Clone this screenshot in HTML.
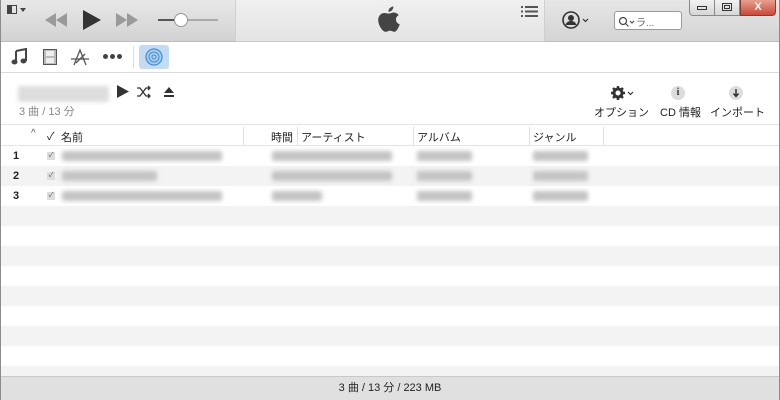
<!DOCTYPE html><html><head><meta charset="utf-8"><style>
*{margin:0;padding:0;box-sizing:border-box}
body{width:780px;height:400px;overflow:hidden;background:#fff;font-family:"Liberation Sans","Noto Sans CJK JP",sans-serif;font-size:11px;color:#222;position:relative}
.a{position:absolute}
.blur{position:absolute;background:#c4c4c4;filter:blur(2px);height:10px;border-radius:2px}
</style></head><body>
<div class="a" style="left:0;top:0;width:780px;height:400px;border:1px solid #8c8c8c;border-top:none"></div>
<div class="a" style="left:1px;top:0;width:234px;height:42px;background:linear-gradient(#e8e8e8,#d2d2d2);border-bottom:1px solid #bdbdbd"></div>
<div class="a" style="left:235px;top:0;width:310px;height:42px;background:linear-gradient(#f0f0f0,#e4e4e4);border-bottom:1px solid #c8c8c8;border-left:1px solid #cfcfcf;border-right:1px solid #cfcfcf"></div>
<div class="a" style="left:545px;top:0;width:234px;height:42px;background:linear-gradient(#e6e6e6,#d4d4d4);border-bottom:1px solid #bdbdbd"></div>
<div class="a" style="left:7px;top:5px;width:10px;height:9px;border:1px solid #444"><div style="width:4px;height:7px;background:#444"></div></div>
<div class="a" style="left:20px;top:8px;border-left:3px solid transparent;border-right:3px solid transparent;border-top:4px solid #444"></div>
<svg class="a" style="left:44px;top:12px" width="24" height="16"><path d="M12 1 L1 8 L12 15Z M23 1 L12 8 L23 15Z" fill="#9a9a9a"/></svg>
<svg class="a" style="left:81px;top:9px" width="22" height="22"><path d="M2 1 L20 11 L2 21Z" fill="#333"/></svg>
<svg class="a" style="left:115px;top:12px" width="24" height="16"><path d="M1 1 L12 8 L1 15Z M12 1 L23 8 L12 15Z" fill="#9a9a9a"/></svg>
<div class="a" style="left:158px;top:19px;width:60px;height:2px;background:#aaa"></div>
<div class="a" style="left:158px;top:19px;width:22px;height:2px;background:#555"></div>
<div class="a" style="left:174px;top:13px;width:14px;height:14px;border-radius:50%;background:#fff;border:1px solid #999"></div>
<svg class="a" style="left:377px;top:6px" width="24" height="28" viewBox="0 0 22 26"><path d="M15 0.5c0.3 2.3-2 5-4.5 4.8-0.3-2.3 2-4.6 4.5-4.8z M11 7c1.5 0 3-1 4.5-1 2 0 3.5 1 4.5 2.5-4 2-3 7.5 1 8.5-1 3-3 7-5 7-1.5 0-2-1-4-1s-2.5 1-4 1C5 24 1 18 1 13 1 9 4 6.5 6.5 6.5 8 6.5 9.5 7 11 7z" fill="#444"/></svg>
<svg class="a" style="left:521px;top:6px" width="18" height="12"><g fill="#555"><rect x="0" y="0" width="2" height="2"/><rect x="4" y="0" width="13" height="2"/><rect x="0" y="4.5" width="2" height="2"/><rect x="4" y="4.5" width="13" height="2"/><rect x="0" y="9" width="2" height="2"/><rect x="4" y="9" width="13" height="2"/></g></svg>
<svg class="a" style="left:562px;top:11px" width="30" height="18"><circle cx="9" cy="9" r="8" fill="none" stroke="#333" stroke-width="1.6"/><circle cx="9" cy="7" r="3" fill="#333"/><path d="M3.5 14c1-3 3-4 5.5-4s4.5 1 5.5 4z" fill="#333"/><path d="M21 8l2.5 2.5 2.5-2.5" fill="none" stroke="#333" stroke-width="1.2"/></svg>
<div class="a" style="left:614px;top:11px;width:68px;height:19px;background:#fff;border:1px solid #9a9a9a;border-radius:3px;font-size:10px;color:#666;padding:2px 0 0 3px"><svg width="18" height="12" style="vertical-align:-2px"><circle cx="5" cy="5" r="3.5" fill="none" stroke="#444" stroke-width="1.2"/><path d="M7.5 7.5l3 3M12 5l2 2 2-2" stroke="#444" fill="none" stroke-width="1.1"/></svg>ラ...</div>
<div class="a" style="left:689px;top:0;width:26px;height:16px;background:linear-gradient(#f2f2f2,#d6d6d6);border:1px solid #888;border-top:none;border-radius:0 0 0 4px"><div style="margin:6px auto 0;width:10px;height:4px;border:1px solid #333"></div></div>
<div class="a" style="left:715px;top:0;width:25px;height:16px;background:linear-gradient(#f2f2f2,#d6d6d6);border:1px solid #888;border-top:none;border-left:none"><div style="margin:3px auto 0;width:10px;height:8px;border:1px solid #333;padding:1px"><div style="width:6px;height:4px;border:1px solid #333"></div></div></div>
<div class="a" style="left:740px;top:0;width:36px;height:16px;background:linear-gradient(#e8a090,#c9483a);border:1px solid #8a3a30;border-top:none;border-radius:0 0 4px 0;color:#fff;text-align:center;font-weight:bold;font-size:11px;line-height:14px">X</div>
<div class="a" style="left:1px;top:72px;width:778px;height:1px;background:#dadada"></div>
<svg class="a" style="left:11px;top:48px" width="16" height="18"><path d="M5 3L15 1V13" fill="none" stroke="#444" stroke-width="2"/><ellipse cx="3.5" cy="14" rx="3" ry="2.5" fill="#444"/><ellipse cx="12.5" cy="13" rx="3" ry="2.5" fill="#444"/><path d="M5 3V14" stroke="#444" stroke-width="2"/></svg>
<svg class="a" style="left:43px;top:49px" width="14" height="16"><rect x="0.5" y="0.5" width="13" height="15" fill="#bbb" stroke="#555"/><rect x="3" y="2" width="8" height="5" fill="#eee"/><rect x="3" y="9" width="8" height="5" fill="#eee"/></svg>
<svg class="a" style="left:70px;top:47px" width="20" height="20"><path d="M4 18L10 3L16 18M1 12H19M6 16L15 7" fill="none" stroke="#555" stroke-width="1.3"/></svg>
<div class="a" style="left:103px;top:54px;width:20px;height:5px;line-height:0"><span style="display:inline-block;width:5px;height:5px;border-radius:50%;background:#444;margin-right:2px"></span><span style="display:inline-block;width:5px;height:5px;border-radius:50%;background:#444;margin-right:2px"></span><span style="display:inline-block;width:5px;height:5px;border-radius:50%;background:#444"></span></div>
<div class="a" style="left:133px;top:46px;width:1px;height:22px;background:#ddd"></div>
<div class="a" style="left:139px;top:45px;width:30px;height:24px;background:#c3dcf3;border-radius:3px"></div>
<svg class="a" style="left:145px;top:48px" width="18" height="18"><circle cx="9" cy="9" r="8" fill="#a9cdef" stroke="#4a8fd0" stroke-width="1.3"/><circle cx="9" cy="9" r="5" fill="none" stroke="#4a8fd0"/><circle cx="9" cy="9" r="2" fill="none" stroke="#4a8fd0"/></svg>
<div class="blur" style="left:18px;top:86px;width:91px;height:16px;background:#ddd"></div>
<svg class="a" style="left:116px;top:84px" width="60" height="16"><path d="M1 1L13 7.5L1 14Z" fill="#333"/><path d="M21 4h3l6 8h3M21 12h3l6-8h3M32 2l2 2-2 2M32 10l2 2-2 2" fill="none" stroke="#333" stroke-width="1.3"/><path d="M48 9L53 3L58 9Z M48 11h10v2H48z" fill="#333"/></svg>
<div class="a" style="left:19px;top:103px;font-size:11px;color:#888">3 曲 / 13 分</div>
<svg class="a" style="left:610px;top:85px" width="26" height="16"><circle cx="8" cy="8" r="4" fill="none" stroke="#333" stroke-width="3"/><path d="M8 1v3M8 12v3M1 8h3M12 8h3M3 3l2 2M11 11l2 2M3 13l2-2M11 5l2-2" stroke="#333" stroke-width="2.4"/><path d="M18 7l2.5 2.5 2.5-2.5" fill="none" stroke="#333" stroke-width="1.2"/></svg>
<div class="a" style="left:594px;top:104px;font-size:11px">オプション</div>
<div class="a" style="left:671px;top:86px;width:14px;height:14px;border-radius:50%;background:#ddd;color:#333;font-size:10px;font-weight:bold;text-align:center;line-height:14px;font-family:'Liberation Serif',serif">i</div>
<div class="a" style="left:660px;top:104px;font-size:11px">CD 情報</div>
<svg class="a" style="left:729px;top:86px" width="14" height="14"><circle cx="7" cy="7" r="7" fill="#ddd"/><path d="M7 3V10M4.5 7.5L7 10.5L9.5 7.5" fill="none" stroke="#333" stroke-width="1.5"/></svg>
<div class="a" style="left:710px;top:104px;font-size:11px">インポート</div>
<div class="a" style="left:1px;top:124px;width:778px;height:1px;background:#e4e4e4"></div>
<div class="a" style="left:1px;top:145px;width:778px;height:1px;background:#e4e4e4"></div>
<div class="a" style="left:31px;top:128px;font-size:10px;color:#555">^</div>
<div class="a" style="left:47px;top:128px;font-size:11px">✓</div>
<div class="a" style="left:61px;top:129px">名前</div>
<div class="a" style="left:243px;top:127px;width:1px;height:18px;background:#e0e0e0"></div>
<div class="a" style="left:271px;top:129px">時間</div>
<div class="a" style="left:297px;top:127px;width:1px;height:18px;background:#e0e0e0"></div>
<div class="a" style="left:301px;top:129px">アーティスト</div>
<div class="a" style="left:413px;top:127px;width:1px;height:18px;background:#e0e0e0"></div>
<div class="a" style="left:417px;top:129px">アルバム</div>
<div class="a" style="left:529px;top:127px;width:1px;height:18px;background:#e0e0e0"></div>
<div class="a" style="left:533px;top:129px">ジャンル</div>
<div class="a" style="left:603px;top:127px;width:1px;height:18px;background:#e0e0e0"></div>
<div class="a" style="left:1px;top:146px;width:778px;height:230px;background:repeating-linear-gradient(#fff 0 20px,#f3f3f3 20px 40px)"></div>
<div class="a" style="left:13px;top:150px;font-weight:bold">1</div>
<div class="a" style="left:13px;top:170px;font-weight:bold">2</div>
<div class="a" style="left:13px;top:190px;font-weight:bold">3</div>
<div class="a" style="left:47px;top:152px;width:8px;height:8px;background:#ddd;font-size:7px;line-height:8px;text-align:center;color:#555">✓</div>
<div class="a" style="left:47px;top:172px;width:8px;height:8px;background:#ddd;font-size:7px;line-height:8px;text-align:center;color:#555">✓</div>
<div class="a" style="left:47px;top:192px;width:8px;height:8px;background:#ddd;font-size:7px;line-height:8px;text-align:center;color:#555">✓</div>
<div class="blur" style="left:62px;top:151px;width:160px"></div>
<div class="blur" style="left:62px;top:171px;width:95px"></div>
<div class="blur" style="left:62px;top:191px;width:160px"></div>
<div class="blur" style="left:272px;top:151px;width:120px"></div>
<div class="blur" style="left:272px;top:171px;width:120px"></div>
<div class="blur" style="left:272px;top:191px;width:50px"></div>
<div class="blur" style="left:417px;top:151px;width:55px"></div>
<div class="blur" style="left:417px;top:171px;width:55px"></div>
<div class="blur" style="left:417px;top:191px;width:55px"></div>
<div class="blur" style="left:533px;top:151px;width:55px"></div>
<div class="blur" style="left:533px;top:171px;width:55px"></div>
<div class="blur" style="left:533px;top:191px;width:55px"></div>
<div class="a" style="left:1px;top:376px;width:778px;height:24px;background:#e0e0e0;border-top:1px solid #c8c8c8;text-align:center;line-height:22px;font-size:11px">3 曲 / 13 分 / 223 MB</div>
</body></html>
